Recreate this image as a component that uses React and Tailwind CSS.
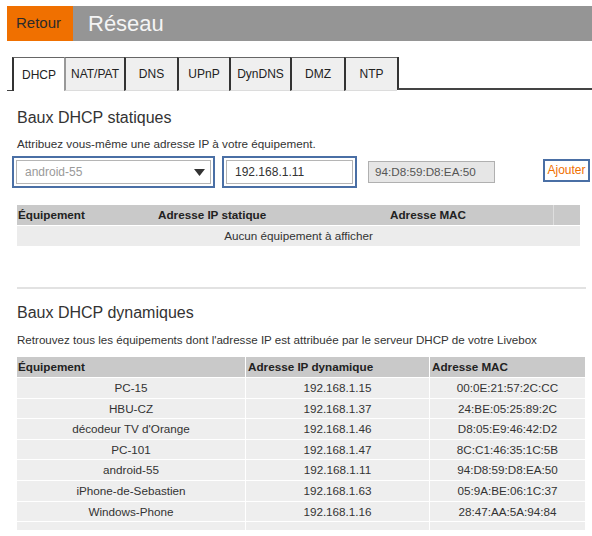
import React from "react";

const tabs = [
  { label: "DHCP", w: "w-[52px]", active: true },
  { label: "NAT/PAT", w: "w-[60px]" },
  { label: "DNS", w: "w-[53px]" },
  { label: "UPnP", w: "w-[52px]" },
  { label: "DynDNS", w: "w-[61px]" },
  { label: "DMZ", w: "w-[54px]" },
  { label: "NTP", w: "w-[53px]" },
];

const rows = [
  ["PC-15", "192.168.1.15", "00:0E:21:57:2C:CC"],
  ["HBU-CZ", "192.168.1.37", "24:BE:05:25:89:2C"],
  ["décodeur TV d'Orange", "192.168.1.46", "D8:05:E9:46:42:D2"],
  ["PC-101", "192.168.1.47", "8C:C1:46:35:1C:5B"],
  ["android-55", "192.168.1.11", "94:D8:59:D8:EA:50"],
  ["iPhone-de-Sebastien", "192.168.1.63", "05:9A:BE:06:1C:37"],
  ["Windows-Phone", "192.168.1.16", "28:47:AA:5A:94:84"],
];

export default function App() {
  return (
    <div className="w-[592px] h-[536px] overflow-hidden bg-white text-[#333] font-['Liberation_Sans',Arial,sans-serif]">
      {/* Header bar */}
      <div className="mt-[6px] ml-[7px] h-[35px] flex">
        <div className="w-[66px] shrink-0 bg-[#f07000] flex items-center pl-[9px] text-[15px] text-[#2b2b2b]">
          Retour
        </div>
        <div className="flex-1 bg-[#959595] flex items-center pl-[15px] text-[22px] text-[#f4f4f4]">
          Réseau
        </div>
      </div>

      {/* Tabs */}
      <div className="mt-[16px] ml-[7px] flex h-[34px]">
        <div className="w-[5px] shrink-0 border-b border-[#444]" />
        {tabs.map((t, i) => (
          <div
            key={t.label}
            className={`${t.w} shrink-0 flex items-center justify-center text-[12px] text-[#222] border-t border-t-[#666] ${
              i === 1 ? "border-l-2 border-l-[#999]" : "border-l-2 border-l-[#333]"
            } ${t.active ? "bg-white" : "bg-[#efefef] border-b border-b-[#dcdcdc]"}`}
          >
            {t.label}
          </div>
        ))}
        <div className="flex-1 border-l-2 border-l-[#333] border-b-2 border-b-[#444] mb-[1px]" />
      </div>

      <div className="px-[17px]">
        {/* Static section */}
        <div className="mt-[18px] h-[18px] leading-[18px] text-[16px] text-[#333]">Baux DHCP statiques</div>
        <div className="mt-[10px] h-[14px] leading-[14px] text-[11.7px] text-[#333]">
          Attribuez vous-même une adresse IP à votre équipement.
        </div>

        <div className="mt-[5px] -ml-[5px] h-[32px] flex items-center">
          <div className="w-[203px] shrink-0 h-[32px] border-2 border-[#4a6fa5] p-[2px]">
            <div className="h-full border border-[#b5b5b5] bg-white flex items-center justify-between pl-[8px] pr-[5px] text-[12px] text-[#9a9a9a]">
              <span>android-55</span>
              <svg width="11" height="7" viewBox="0 0 11 7">
                <polygon points="0,0 11,0 5.5,7" fill="#333" />
              </svg>
            </div>
          </div>
          <div className="ml-[7px] shrink-0 w-[135px] h-[32px] border-2 border-[#4a6fa5] p-[2px]">
            <div className="h-full border border-[#b5b5b5] bg-white flex items-center pl-[8px] text-[12px] text-[#333]">
              192.168.1.11
            </div>
          </div>
          <div className="ml-[11px] shrink-0 w-[127px] h-[22px] border border-[#b0b0b0] bg-[#e6e6e6] flex items-center pl-[6px] text-[11.7px] text-[#555]">
            94:D8:59:D8:EA:50
          </div>
          <div className="ml-[48px] shrink-0 w-[47px] h-[23px] -mt-[4px] border-2 border-[#4a6fa5] bg-white flex items-center justify-center text-[12px] text-[#f07000]">
            Ajouter
          </div>
        </div>

        <div className="mt-[17px] w-[563px] text-[11.7px]">
          <div className="h-[20px] bg-[#c9c9c9] flex items-center font-bold text-[#222]">
            <div className="w-[138px] pl-[1px]">Équipement</div>
            <div className="w-[148px] pl-[3px]">Adresse IP statique</div>
            <div className="w-[250px] text-center">Adresse MAC</div>
            <div className="w-[27px] h-full border-l border-[#dedede]" />
          </div>
          <div className="h-[21px] border-t border-white bg-[#ececec] flex items-center justify-center text-[#333]">
            Aucun équipement à afficher
          </div>
        </div>

        <div className="mt-[41px] w-[569px] h-[2px] bg-[#e2e2e2]" />

        {/* Dynamic section */}
        <div className="mt-[15px] h-[18px] leading-[18px] text-[16px] text-[#333]">Baux DHCP dynamiques</div>
        <div className="mt-[11px] h-[14px] leading-[14px] text-[11.6px] text-[#333]">
          Retrouvez tous les équipements dont l'adresse IP est attribuée par le serveur DHCP de votre Livebox
        </div>

        <div className="mt-[10px] w-[568px] text-[11.7px]">
          <div className="h-[20px] bg-[#c9c9c9] flex items-center font-bold text-[#222]">
            <div className="w-[229px] h-full flex items-center pl-[1px] border-r border-white">Équipement</div>
            <div className="w-[184px] h-full flex items-center pl-[2px] border-r border-white">Adresse IP dynamique</div>
            <div className="flex-1 pl-[2px]">Adresse MAC</div>
          </div>
          {rows.map((r) => (
            <div key={r[0]} className="h-[20.6px] border-t border-white bg-[#eeeeee] flex text-[#333]">
              <div className="w-[229px] flex items-center justify-center border-r border-white">{r[0]}</div>
              <div className="w-[184px] flex items-center justify-center border-r border-white">{r[1]}</div>
              <div className="flex-1 flex items-center justify-center">{r[2]}</div>
            </div>
          ))}
          <div className="h-[9px] border-t border-white bg-[#eeeeee] flex">
            <div className="w-[229px] border-r border-white" />
            <div className="w-[184px] border-r border-white" />
            <div className="flex-1" />
          </div>
        </div>
      </div>
    </div>
  );
}
